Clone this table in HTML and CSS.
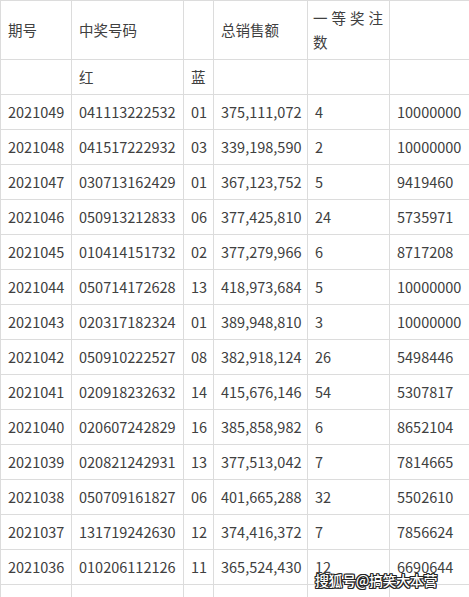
FILE: index.html
```html
<!DOCTYPE html>
<html lang="zh-CN">
<head>
<meta charset="utf-8">
<title>双色球开奖数据</title>
<link rel="stylesheet" href="styles.css">
</head>
<body>
<div class="page">
<table class="draws">
  <colgroup>
    <col class="c-issue"><col class="c-red"><col class="c-blue"><col class="c-sales"><col class="c-count"><col class="c-prize">
  </colgroup>
  <tbody>
    <tr class="head"><td>期号</td><td>中奖号码</td><td></td><td>总销售额</td><td class="justify">一等奖注数</td><td></td></tr>
    <tr><td></td><td>红</td><td>蓝</td><td></td><td></td><td></td></tr>
    <tr><td>2021049</td><td>041113222532</td><td>01</td><td>375,111,072</td><td>4</td><td>10000000</td></tr>
    <tr><td>2021048</td><td>041517222932</td><td>03</td><td>339,198,590</td><td>2</td><td>10000000</td></tr>
    <tr><td>2021047</td><td>030713162429</td><td>01</td><td>367,123,752</td><td>5</td><td>9419460</td></tr>
    <tr><td>2021046</td><td>050913212833</td><td>06</td><td>377,425,810</td><td>24</td><td>5735971</td></tr>
    <tr><td>2021045</td><td>010414151732</td><td>02</td><td>377,279,966</td><td>6</td><td>8717208</td></tr>
    <tr><td>2021044</td><td>050714172628</td><td>13</td><td>418,973,684</td><td>5</td><td>10000000</td></tr>
    <tr><td>2021043</td><td>020317182324</td><td>01</td><td>389,948,810</td><td>3</td><td>10000000</td></tr>
    <tr><td>2021042</td><td>050910222527</td><td>08</td><td>382,918,124</td><td>26</td><td>5498446</td></tr>
    <tr><td>2021041</td><td>020918232632</td><td>14</td><td>415,676,146</td><td>54</td><td>5307817</td></tr>
    <tr><td>2021040</td><td>020607242829</td><td>16</td><td>385,858,982</td><td>6</td><td>8652104</td></tr>
    <tr><td>2021039</td><td>020821242931</td><td>13</td><td>377,513,042</td><td>7</td><td>7814665</td></tr>
    <tr><td>2021038</td><td>050709161827</td><td>06</td><td>401,665,288</td><td>32</td><td>5502610</td></tr>
    <tr><td>2021037</td><td>131719242630</td><td>12</td><td>374,416,372</td><td>7</td><td>7856624</td></tr>
    <tr><td>2021036</td><td>010206112126</td><td>11</td><td>365,524,430</td><td>12</td><td>6690644</td></tr>
    <tr><td>2021035</td><td>131416202328</td><td>11</td><td>383,383,034</td><td>7</td><td>7814883</td></tr>
  </tbody>
</table>
<div class="watermark">搜狐号@搞笑大本营</div>
</div>
</body>
</html>
```
FILE: styles.css
```css
html, body {
  margin: 0;
  padding: 0;
  background: #ffffff;
}
.page {
  position: relative;
  width: 469px;
  height: 597px;
  overflow: hidden;
}
.draws {
  border-collapse: collapse;
  table-layout: fixed;
  width: 469px;
  font-family: "Noto Sans CJK SC", "Noto Sans", sans-serif;
  font-size: 14.5px;
  line-height: 24px;
  color: #404040;
}
.c-issue { width: 71px; }
.c-red { width: 112px; }
.c-blue { width: 30px; }
.c-sales { width: 94px; }
.c-count { width: 82px; }
.c-prize { width: 80px; }
.draws td {
  border: 1px solid #dcdcdc;
  padding: 5px 6px 5px 7px;
  height: 24px;
  vertical-align: middle;
  white-space: normal;
  overflow: hidden;
}
.draws td.justify {
  text-align: justify;
  text-justify: inter-character;
  padding-left: 5px;
}
.watermark {
  position: absolute;
  left: 315px;
  top: 570px;
  font-family: "Noto Sans CJK SC", sans-serif;
  font-size: 14px;
  font-weight: 500;
  line-height: 20px;
  letter-spacing: -0.4px;
  color: #ffffff;
  text-shadow: -1px -1px 0 #222, 1px -1px 0 #222, -1px 1px 0 #222, 1px 1px 0 #222, 0 1px 0 #222, 0 -1px 0 #222, 1px 0 0 #222, -1px 0 0 #222;
}
```
